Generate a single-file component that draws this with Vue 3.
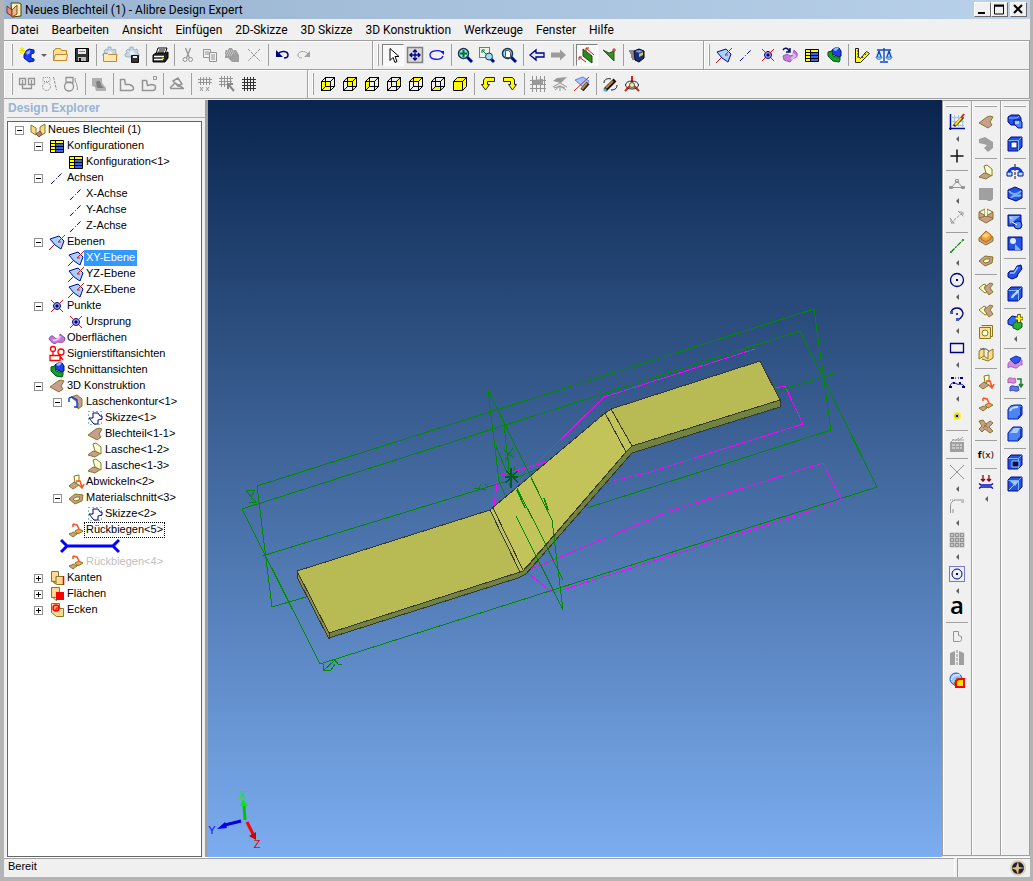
<script setup>
import { ref } from 'vue'

const menus = ['Datei', 'Bearbeiten', 'Ansicht', 'Einfügen', '2D-Skizze', '3D Skizze', '3D Konstruktion', 'Werkzeuge', 'Fenster', 'Hilfe']

const SHEET = 'fill="#c99c94" stroke="#857a1c"'
const TAB = 'fill="#ffffd8" stroke="#857a1c"'
const BLUE = 'fill="#2452e6" stroke="#000a8c"'
const GRAY = 'fill="none" stroke="#949494"'

// wireframe cube with one yellow face
const faces = {
  front: 'M1.5 5.5h9v9h-9z',
  back: 'M5.5 1.5h9v9h-9z',
  left: 'M1.5 5.5l4-4v9l-4 4z',
  right: 'M10.5 5.5l4-4v9l-4 4z',
  top: 'M1.5 5.5l4-4h9l-4 4z',
  bottom: 'M1.5 14.5l4-4h9l-4 4z',
}
const cube = (face) =>
  `<path d="${faces[face]}" fill="#ff0"/><path d="${Object.values(faces).join('')}" fill="none" stroke="#000"/>`

const blueBox = (inner) =>
  `<path d="M1 4l3-3h11v10l-4 4H1z" ${BLUE}/><path d="M1.500 4.500h10l3-3M11.500 4.500v10" fill="none" stroke="#7fb2ff"/>${inner}`

const lens = '<path d="M10 10l5 5" stroke="#00108c" stroke-width="3"/><circle cx="6.500" cy="6.500" r="5" fill="#9fe0f0" stroke="#123a58" stroke-width="1.500"/>'
const gear = '<path d="M6 0h3v2l2 1 2-1 1 2-1 2 2 1v2l-2 1H3L1 9V7l2-1-1-2 2-2 2 1z" fill="#c9d8e6" stroke="#9db2c4"/><circle cx="8" cy="6" r="2" fill="#f0f0f0"/>'

const icons = {
  app: '<path d="M5 1h8l2 1v12l-9 1z" fill="#fff3b8" stroke="#4a3c10"/><path d="M1 4l5 4v6l-5-3z" fill="#e88e70" stroke="#7a2f18"/><path d="M6 8l5-5v9l-5 3z" fill="#f5b38c" stroke="#8a4a10"/>',
  new: '<path d="M7 4l3-2 5 1v3l-3 1v4l3 1v2l-5 1-5-4V8z" fill="#1c3df0" stroke="#0010a0"/><path d="M7 5l4-2v3L8 8z" fill="#8fb4ff"/><path d="M3 0v7M0 3.500h6M1 1l5 5M5 1L1 6" stroke="#f0e000"/>',
  open: '<path d="M1.500 13.500v-10h1l1-2h5l1 2h5v10z" fill="#ffdc90" stroke="#c08a30"/><path d="M1.500 13.500l2-6h12l-1 6z" fill="#ffeebe" stroke="#c98a2c"/>',
  save: '<path d="M1.500 1.500h13v13h-13z" fill="#333" stroke="#000"/><path d="M4 2h8v5H4z" fill="#e8e8e8"/><path d="M5 4.500h6" stroke="#888"/><path d="M4 10h8v4H4z" fill="#bbb"/><path d="M5 11h2v3H5z" fill="#111"/>',
  openGear: gear + '<path d="M1.500 14.500v-8h4l1 1h8v7z" fill="#ffe9b4" stroke="#c98a2c"/>',
  saveGear: gear + '<path d="M7.500 8.500h7v7h-7z" fill="#333" stroke="#111"/><path d="M9 9h4v2H9z" fill="#eee"/>',
  print: '<path d="M6 1h9l-2 6H4z" fill="#fff" stroke="#000"/><path d="M1 8l3-2h10l2-1v6l-3 4H1z" fill="#222" stroke="#000"/><path d="M7 3h6M6 5h6" stroke="#000"/><path d="M2 9.500h10M2 12.500h9" stroke="#fff" stroke-width="1.500"/><path d="M10 11h2v1h-2z" fill="#e8e000"/>',
  cut: `<path d="M5.500 1l4 10M10.500 1l-4 10" ${GRAY} stroke-width="1.300"/><circle cx="5" cy="12.500" r="2" ${GRAY}/><circle cx="10.500" cy="12.500" r="2" ${GRAY}/>`,
  copy: `<path d="M1.500 2.500h7v8h-7zM3 5h4M3 7h4" ${GRAY}/><path d="M7.500 5.500h7v9h-7z" fill="#f0f0f0" stroke="#949494"/><path d="M9 8h4M9 10h4M9 12h4" stroke="#949494"/>`,
  paste: '<path d="M1 3h3l1-2h3l1 2h3l3 5v7H8l-4-4H1z" fill="#a0a0a0"/><path d="M1 4h10M2 6h10M1 8h7" stroke="#dcdcdc" stroke-dasharray="1 1"/>',
  delete: `<path d="M2 2l12 12M14 2L2 14" ${GRAY} stroke-dasharray="3 1"/>`,
  undo: '<path d="M4 7C7 3 14 4 14 8c0 3-3 3-4 3" fill="none" stroke="#000080" stroke-width="1.500"/><path d="M2 3v7h7z" fill="#000080"/>',
  redo: '<path d="M12 7C9 3 2 4 2 8c0 3 3 3 4 3" fill="none" stroke="#a0a0a0"/><path d="M14 4v6H8z" fill="#a0a0a0"/>',
  pointer: '<path d="M5 1.500v12l3-3 2 5 2-1-2-5h4z" fill="#fff" stroke="#000"/>',
  pan: '<path d="M.5.500h15v15H.500z" fill="#d8d8d8" stroke="#808080" stroke-width="1.500"/><path d="M8 3v10M3 8h10M6 5l2-2 2 2M6 11l2 2 2-2M5 6L3 8l2 2M11 6l2 2-2 2" fill="none" stroke="#000090" stroke-width="1.300"/>',
  rotate: '<path d="M13 5C10 3 1 3 1 8s11 6 13 1" fill="none" stroke="#1010ff" stroke-width="1.300"/><path d="M11 4h4v4z" fill="#1010ff"/>',
  zoomIn: lens + '<path d="M6.500 3v7M3 6.500h7" stroke="#007030" stroke-width="2"/>',
  zoomArea: '<path d="M.5.500h10v10H.500z" fill="none" stroke="#000" stroke-dasharray="1 1"/><path d="M3 3l4 4M3 6V3h3" fill="none" stroke="#008030"/><path d="M12 12l3 3" stroke="#00108c" stroke-width="3"/><circle cx="10" cy="9.500" r="3.500" fill="#9fe0f0" stroke="#123a58"/>',
  zoomFit: lens + '<path d="M4.500 3.500h3l2 2v5h-5z" fill="#fff" stroke="#555"/>',
  back: '<path d="M1 8l6-5v3h8v4H7v3z" fill="#dfe8fa" stroke="#000080" stroke-width="1.300"/>',
  forward: '<path d="M15 8L9 2.500v3H0v5h9v3z" fill="#9c9c9c"/>',
  dualPlane: '<path d="M4 2l9 7v7l-9-7z" fill="#2f8a18" stroke="#145008"/><path d="M0 10l7 5M7 1l8 7M0 13v-3h3M7 4V1h3" fill="none" stroke="#d01818"/>',
  plane: '<path d="M2 3l6 3 5-2v10z" fill="#3c8a28" stroke="#205c10"/><path d="M13 1v4M11 3h4" stroke="#c02020"/>',
  fast: '<path d="M5 4l5-2 5 2v7l-5 4-4-2z" fill="#1c2c80" stroke="#000"/><path d="M6 4l4-1 4 1-4 2z" fill="#70a0f0"/><path d="M10 7l4-2v3l-4 2z" fill="#d8c840"/><path d="M0 4h5M1 6h5M2 8h4M2 10h4M3 12h3" stroke="#222"/>',
  refPlane: '<path d="M0 16l5-5" stroke="#a01010"/><path d="M1 5l9-3 5 5-3 8-6-4z" fill="#a9d0ff" stroke="#000a90"/><path d="M9 8l7-7M9 8h3" fill="none" stroke="#e01818"/>',
  axis: '<path d="M2 14L14 2" stroke="#000070" stroke-dasharray="5 2 1 2"/>',
  point: '<path d="M2 2l12 12M14 2L2 14" stroke="#e01010"/><circle cx="8" cy="8" r="3.500" fill="#9aa4e8" stroke="#000090"/><path d="M2 2l4 4M14 2l-4 4" stroke="#e01010"/><path d="M7 7h2v2H7z" fill="#000" stroke="#000a70"/>',
  surface: '<path d="M0 9c2-5 4-3 6-1s5 0 5-4l5 4c0 6-5 4-7 4s-3 5-9-3z" fill="#c478dc" stroke="#8848b4"/><path d="M4 10c3 1 6-1 7-4" fill="none" stroke="#f0c8f8" stroke-width="2"/>',
  surfaceArrow: '<path d="M1 9l4-2 3 2 3-1 1-5 3 3c1 5-2 5-4 5l-3 4-6-2z" fill="#c080d8" stroke="#9858c0"/><path d="M10 6l3 3-4 3" fill="none" stroke="#ecb8f4" stroke-width="2"/><path d="M1 3c2-3 5-2 6 1M8 1v4H4" fill="none" stroke="#001060" stroke-width="1.500"/>',
  table: '<path d="M1.500 2.500h13v12h-13z" fill="#3464f0" stroke="#000"/><path d="M2 3h4v11H2z" fill="#ff0"/><path d="M2 3h12v2H2z" fill="#ff0"/><path d="M1 5.500h14M1 8.500h14M1 11.500h14M6.500 2v12" stroke="#000"/>',
  section: '<path d="M6 3l3-2h4l2 3v5l-2 1-7-3z" fill="#2040e8" stroke="#000a80"/><path d="M9 1h4l-3 3-3-1z" fill="#90c0ff"/><path d="M2 5l4-1 1 5 3 1h4v3l-1 2-6-1-5-5z" fill="#18a028" stroke="#005010"/>',
  measure: '<path d="M1.500 1.500h3v8l2 2 6-7 3 2-9 9h-5z" fill="#ff0" stroke="#222"/><path d="M3 4h2M3 7h2M3 10h2M8 9l1 2M10 6l2 2" stroke="#222"/>',
  scale: '<path d="M8 1v13M1 3h14M4 15h8M3 4L1 10M3 4l2 6M13 4l-2 6M13 4l2 6" fill="none" stroke="#1048c8" stroke-width="1.400"/><path d="M0 10h6c0 3-6 3-6 0zM10 10h6c0 3-6 3-6 0z" fill="#b0e4ff" stroke="#1878d0"/>',
  dim1: `<path d="M.5 2.500h6v6h-6zM9.500 2.500h6v6h-6zM3.500 4v9M12.500 4v9M3 12.500h10" ${GRAY} stroke-width="1.300"/>`,
  dim2: `<path d="M2 1.500h7v4H2z" ${GRAY} stroke-dasharray="1 1"/><circle cx="5.500" cy="10.500" r="4" ${GRAY} stroke-dasharray="2 1"/><path d="M12.500 1l3 13" ${GRAY} stroke-dasharray="3 1"/>`,
  dim3: `<path d="M3 1.500h7v5H3z" ${GRAY} stroke-width="1.300"/><circle cx="6" cy="10.500" r="4.500" ${GRAY} stroke-width="1.300"/><path d="M12.500 2c-2 3 2 4 2 12" ${GRAY}/>`,
  hatchPaste: '<path d="M1 2h10v5l4 5v3H5l-1-4-3-1z" fill="#b0b0b0"/><path d="M5 6c3-3 5 0 5 3l3 3H6z" fill="#808080"/>',
  shape: `<path d="M1.500 3.500h4l1 5 4 0c3 1 4 2 4 4 0 1-1 2-3 2h-10z" ${GRAY} stroke-width="1.500"/>`,
  shapeDot: `<path d="M1.500 4.500h4l1 5 4-1c3 0 4 1 4 3 0 2-1 3-3 3h-10z" ${GRAY} stroke-width="1.500"/><path d="M12.500.500h3v3h-3z" ${GRAY}/>`,
  edit: `<path d="M1 12.500h14M1 12l5-5 8 5M4 5l5-3 4 6-4 2z" ${GRAY} stroke-width="1.500"/>`,
  gridX: `<path d="M3.500 1v8M6.500 1v8M9.500 1v8M12.500 1v8M1 3.500h14M1 6.500h14M3 11l3 4M6 11l-3 4M9 11l3 4M12 11l-3 4" ${GRAY}/>`,
  gridArrow: `<path d="M2.500 0v11M5.500 0v11M8.500 0v9M11.500 0v8M0 2.500h14M0 5.500h13M0 8.500h11" ${GRAY}/><path d="M9 8l6 7M9 13V8h5" fill="none" stroke="#888" stroke-width="2"/>`,
  grid: '<path d="M3.500 1v14M6.500 1v14M9.500 1v14M12.500 1v14M1 3.500h14M1 6.500h14M1 9.500h14M1 12.500h14" stroke="#333"/>',
  cubeFront: cube('front'),
  cubeBack: cube('back'),
  cubeLeft: cube('left'),
  cubeRight: cube('right'),
  cubeTop: cube('top'),
  cubeBottom: cube('bottom'),
  cubeSolid: '<path d="M1.500 5.500l4-4h9v9l-4 4h-9z" fill="#ff0" stroke="#000"/><path d="M1.500 5.500h9v9M10.500 5.500l4-4" fill="none" stroke="#000"/>',
  turnLeft: '<path d="M3.500 8.500V4l2-2.500h9v4h-7v3h2l-4 5.500-4-5.500z" fill="#ff0" stroke="#222"/>',
  turnRight: '<path d="M12.500 8.500V4l-2-2.500h-9v4h7v3h-2l4 5.500 4-5.500z" fill="#ff0" stroke="#222"/>',
  meshPlane: `<path d="M2.500 0v16M6.500 0v16M10.500 0v16M14.500 0v16M0 4.500h16M0 8.500h16M0 12.500h16" ${GRAY}/><path d="M3 4l10-1v6H2z" fill="#999"/>`,
  shadePlane: `<path d="M1 5l4-3 10-1-6 6z" fill="#999"/><path d="M8 7l-7 4M8 7l7 4M3 14l5-4 6 4M2 12l6-2 5 2M8 10v5" ${GRAY}/>`,
  planeBrush: '<path d="M1 4l8-3 6 4-5 7z" fill="#a8c4ff" stroke="#6080e0"/><path d="M0 15L15 1" stroke="#d02020"/><path d="M8 14l6-7" stroke="#222" stroke-width="4"/><path d="M8 13l5-6" stroke="#b88438" stroke-width="2"/>',
  brush: '<path d="M3 14L13 4" stroke="#111" stroke-width="4"/><path d="M4 12l7-7" stroke="#b88438" stroke-width="2"/><path d="M2 15l2-2" stroke="#50b8d8" stroke-width="3"/><path d="M2 7c0-4 4-5 7-4M15 9c0 4-3 5-6 5" fill="none" stroke="#111"/>',
  orbit: '<path d="M8 7V0M6 10l-5 5M10 10l5 5" stroke="#e02010" stroke-width="2"/><ellipse cx="8" cy="9" rx="6.500" ry="4" fill="none" stroke="#222"/><circle cx="8" cy="9" r="2.500" fill="#f4ec90" stroke="#555"/>',
  root: '<path d="M1 3l5 3v7l-5-3zM10 5l5-3v9l-5 3z" fill="#ffdb88" stroke="#857a1c"/><path d="M6 12l4-3 2 3-3 3z" fill="#c08078" stroke="#805048"/>',
  pen: '<circle cx="4" cy="3" r="2.500" fill="none" stroke="#f00" stroke-width="1.300"/><circle cx="12" cy="6" r="3" fill="none" stroke="#f00" stroke-width="1.300"/><path d="M1 9.500h10v5H1zM10 9l4 5M4 6v3" fill="none" stroke="#f00" stroke-width="1.300"/>',
  sheet: `<path d="M1 9l8-6 3-1 3 1-3 5 2 3-4 3z" ${SHEET}/>`,
  flangeContour: `<path d="M3 3l6-2 5 4v7l-4 3V9z" ${SHEET}/><path d="M1 4l3-1 5 3v8M1 4v4M6 13h4" fill="none" stroke="#1048e8" stroke-width="1.500"/>`,
  sketch: '<path d="M1.500 1.500h13v13h-13z" fill="none" stroke="#008080" stroke-dasharray="1 3"/><path d="M6 3v5H2l5 6h4V10l4-1v-3h-2l-2-3z" fill="none" stroke="#000080"/>',
  flange: `<path d="M1 13l5-4 8 2-6 4z" ${SHEET}/><path d="M6 2l3-1 5 4v7l-6-3z" ${TAB}/>`,
  unfold: `<path d="M1 12l5-4 5 3-6 4z" ${SHEET}/><path d="M6 2l5-1v6l-4 2z" ${TAB}/><path d="M8 7h4l2 6M11 11l3 3 2-4" fill="none" stroke="#ff5020" stroke-width="1.500"/>`,
  cutout: `<path d="M1 9l6-5 8 1-1 6-7 3z" ${SHEET}/><path d="M5 9l3-2h4l-1 3-4 1z" fill="#fffbe0" stroke="#857a1c"/>`,
  refold: `<path d="M1 12l5-2 3 2-4 3z" ${SHEET}/><path d="M7 9l4-2 4 2-5 3z" fill="#ff9868" stroke="#857a1c"/><path d="M5 2l4 1 2 4M5 2v3" fill="none" stroke="#ff5020" stroke-width="1.500"/>`,
  edges: '<path d="M2.500 1.500h7v10h-7z" fill="#ffd898" stroke="#857a1c"/><path d="M3 11l4 3V6.500h7.500v8h-7z" fill="#ffd898" stroke="#857a1c"/><path d="M14.500 6v9" stroke="#f00" stroke-width="1.500"/>',
  faces: '<path d="M2.500 1.500h8v10h-8z" fill="#ffd898" stroke="#857a1c"/><path d="M3 11l5 4" stroke="#857a1c"/><path d="M7 6h8v8H7z" fill="#f00"/>',
  corners: '<path d="M2.500 1.500h8v5h4v8h-7l-5-4z" fill="#ffd898" stroke="#857a1c"/><circle cx="7" cy="6" r="3" fill="#ffa070" stroke="#f00" stroke-width="1.500"/><path d="M7 6h3M7 6v3" stroke="#f00"/>',
  sketchMode: '<path d="M1.500 0v16M0 14.500h16" stroke="#0010a0" stroke-width="1.500"/><path d="M5.500 1v13M9.500 1v13M13.500 1v13M2 3.500h13M2 7.500h13M2 11.500h13" stroke="#a8c0f0"/><path d="M5 12l9-9" stroke="#222" stroke-width="3"/><path d="M6 11l7-8" stroke="#ffe000" stroke-width="2"/><path d="M12 4l3-4" stroke="#f02020" stroke-width="2"/>',
  plus: '<path d="M8 1.500v13M1.500 8h13" stroke="#111" stroke-width="1.500"/>',
  dimTri: `<path d="M1 11.500h14M3 11l5-6 5 6" ${GRAY}/><path d="M6.500 3.500h3v3h-3zM.5 10.500h3v2h-3zM12.500 10.500h3v2h-3z" ${GRAY}/>`,
  dimension: `<path d="M2 13L14 2M2 9v4h4M10 2h4v4M1 8l5 6M9 1l6 6" ${GRAY} stroke-dasharray="3 1"/>`,
  line: '<path d="M2 14L14 2" stroke="#008000" stroke-width="1.300" stroke-dasharray="5 1 2 1"/><path d="M1 13h2v2H1zM13 1h2v2h-2z" fill="#30a030"/>',
  circle: '<circle cx="8" cy="8" r="6.500" fill="none" stroke="#000080" stroke-width="1.300"/><path d="M7 7h2v2H7z" fill="#000080"/>',
  arc: '<path d="M2 6C4 1 12 0 14 7c0 3-2 5-5 7M7 8h2" fill="none" stroke="#000080" stroke-width="1.300"/><path d="M1 5h3v3H1zM7 12h3v3H7z" fill="#4458c0"/>',
  rect: '<path d="M1.500 3.500h13v9h-13z" fill="none" stroke="#000080" stroke-width="1.300"/>',
  spline: '<path d="M1 12c2-5 5-3 7-2s5-1 7 2" fill="none" stroke="#000080"/><path d="M3 4h9" stroke="#000080" stroke-dasharray="1 2"/><path d="M0 12h3v2H0zM4 8h2v2H4zM10 8h2v2h-2zM13 12h3v2h-3zM2 3h3v2H2zM11 3h3v2h-3z" fill="#000080"/>',
  dot: '<circle cx="8" cy="8" r="4" fill="#fff600"/><circle cx="8" cy="8" r="2.500" fill="#b8b8b8"/><path d="M7 7h2v2H7z" fill="#000"/>',
  equation: '<path d="M1 6h14v10H1z" fill="#a0a0a0"/><path d="M2 6l3-3M6 5l4-3M9 5l5-4M3 4h12" stroke="#a0a0a0"/><path d="M3 9h10M3 12h10" stroke="#eee" stroke-dasharray="3 1"/>',
  trim: `<path d="M1 1l14 14M15 1L1 15" ${GRAY}/>`,
  fillet: `<path d="M1.500 15V8c0-4 3-6 6-6H15M4 15v-4M12 4h3" ${GRAY}/><path d="M1 2h6" stroke="#949494" stroke-dasharray="1 1"/>`,
  pattern: `<path d="M1.500 1.500h3v3h-3zM6.500 1.500h3v3h-3zM11.500 1.500h3v3h-3zM1.500 6.500h3v3h-3zM6.500 6.500h3v3h-3zM11.500 6.500h3v3h-3zM1.500 11.500h3v3h-3zM6.500 11.500h3v3h-3zM11.500 11.500h3v3h-3z" ${GRAY} stroke-width="1.500"/>`,
  circleFrame: '<path d="M.5.500h15v15H.500z" fill="none" stroke="#0000b0" stroke-dasharray="1 1"/><circle cx="8" cy="8" r="5" fill="none" stroke="#000080"/><path d="M7 7h2v2H7z" fill="#000080"/>',
  text: '<text x="8" y="14" text-anchor="middle" font-family="Open Sans, sans-serif" font-weight="600" font-size="24">a</text>',
  fx: '<text x="8" y="12" text-anchor="middle" font-family="DejaVu Sans, sans-serif" font-size="9"><tspan font-weight="bold">f</tspan>(x)</text>',
  outline: `<path d="M4.500 3.500h5v4l3 1v3c0 1-1 2-2 2h-6z" ${GRAY}/>`,
  mirror: '<path d="M1 3l5-2v14H1zM15 3l-5-2v14h5z" fill="#a0a0a0"/><path d="M8 0v16" stroke="#888" stroke-dasharray="3 1"/>',
  analyse: '<circle cx="7" cy="7" r="6" fill="#a0c8ff" stroke="#1848d0"/><path d="M2 8c1-4 5-6 9-5" stroke="#fff" fill="none"/><path d="M5 12l3-6 5 1v7H6z" fill="#f8d800" stroke="#886000"/><path d="M7 15V9l3-2h5v8z" fill="#f4e400" stroke="#f00" stroke-width="2"/>',
  bendGray: '<path d="M1 3l6-2 8 5v6l-5 4-4-4 3-3-8-2z" fill="#a0a0a0"/>',
  blockGray: '<path d="M1 2h14v11l-2 2h-3l-1-1H1z" fill="#a0a0a0"/>',
  corner: `<path d="M8 8l7-4v7l-7 4-7-4V4z" ${SHEET}/><path d="M7 1v7M9 1v7M1 4l6-3M9 1l6 3M1 10l7-2 7 2" fill="none" stroke="#857a1c"/><path d="M7 1h2v7H7z" fill="#ffffd8"/>`,
  dimple: `<path d="M1 8l7-5 7 4v4l-7 4-7-4z" ${SHEET}/><path d="M3 6l5-5 5 4v4l-5 3-5-3z" fill="#f0a038" stroke="#b06818"/><path d="M4 6l4-3 4 2-4 3z" fill="#ffd478"/>`,
  sheetCut: `<path d="M6 8l6-5 3 1-3 4 3 4-4 3z" ${SHEET}/><path d="M1 8l5-4 2 1-2 3 3 4-2 1z" ${TAB}/>`,
  frame: `<path d="M1.500 3.500h11v11h-11zM3.500 1.500h11v11h-2" fill="#ffe0a0" stroke="#857a1c"/><circle cx="7" cy="9" r="3" ${TAB}/>`,
  boxFold: '<path d="M1 5l5-3v8l-5 3zM6 10l4 3V6l5-3v9l-5 3-6-2" fill="#ffdb88" stroke="#857a1c"/><path d="M2 3h6l3 2" fill="none" stroke="#557" />',
  pattern3: `<path d="M1 3l4-1 3 4 4-3 3 2-4 4 4 4-3 2-5-4-3 3-3-3 3-3z" ${SHEET}/><path d="M6 7l4 3M5 10l4-4" stroke="#857a1c"/>`,
  thickness: '<path d="M5 1v6M3 5l2 2 2-2M11 1v6M9 5l2 2 2-2" fill="none" stroke="#900010" stroke-width="1.300"/><path d="M1 9.500l2 1.500h10l2-1.500M1 14.500L3 13h10l2 1.500" fill="none" stroke="#0010c0" stroke-width="1.500"/>',
  extrude: `<path d="M1 3l3-2h8l2 3v4l-3 3H4L1 8z" ${BLUE}/><path d="M2 4h8l2-2" fill="none" stroke="#8cb8ff"/><path d="M7 6h6l2 2v6h-4L7 10z" fill="#4a80ff" stroke="#000a8c"/><path d="M8 7h4v3H8z" fill="#a8ccff"/>`,
  pocket: blueBox('<path d="M4 6h6v6H4z" fill="#fff" stroke="#000a8c"/>'),
  revolve: '<path d="M8 0v16" stroke="#111" stroke-dasharray="3 1"/><path d="M2 8c0-5 12-5 12 0" fill="none" stroke="#1038e0" stroke-width="3"/><path d="M0 8h5v4H0zM11 8h5v4h-5z" fill="#b8e0ff" stroke="#0010a0"/>',
  revolveCut: `<path d="M1 4l7-3 7 3v8l-6 3-8-3z" ${BLUE}/><path d="M2 5c3 4 8 4 12 0M4 12c2-4 6-1 10-3" fill="none" stroke="#7ab0ff" stroke-width="2"/>`,
  loft: '<path d="M1 1h13v11H1z" fill="#2452e6" stroke="#000a8c"/><path d="M2 2h11L3 10z" fill="#80b0ff"/><circle cx="11" cy="11" r="4" fill="#5088f8" stroke="#000a8c"/><path d="M3 4h2M5 8l5 3" stroke="#fff"/>',
  loftCut: '<path d="M1 1h14v13H1z" fill="#2452e6" stroke="#000a8c"/><circle cx="6" cy="5" r="3" fill="#d8f0ff"/><path d="M8 8l6 6H8z" fill="#80b0ff"/>',
  sweep: `<path d="M1 9l2-2h4l3-5 4-1 1 4-4 5-1 3-5 2-4-2z" ${BLUE}/><path d="M3 9h4l4-6" fill="none" stroke="#90c0ff" stroke-width="1.500"/>`,
  sweepCut: blueBox('<path d="M5 12c1-5 5-3 6-8" fill="none" stroke="#b8d8ff" stroke-width="2.500"/>'),
  boolean: '<path d="M1 6l4-4 5 1 1 6-5 3-5-2z" fill="#3468f8" stroke="#000a8c"/><path d="M6 10l4-3 5 2v4l-4 3-5-2z" fill="#28b030" stroke="#006010"/><path d="M12 0v9M8 4.500h8" stroke="#554800" stroke-width="3.500"/><path d="M12 1v7M8.500 4.500h7" stroke="#ff0" stroke-width="2"/>',
  surfaceTop: '<path d="M1 10c2-4 5-5 7-2s5-3 7-2v5c-3-1-3 3-6 3s-5-3-8 0z" fill="#d08ce0" stroke="#a060c0"/><path d="M3 5l6-3 5 2-2 4-4 2z" fill="#2c58f0" stroke="#1030b0"/>',
  surfaceSwap: '<path d="M1 3c3-3 4 1 7-1l1 4c-3 3-5-1-8 1z" fill="#d88cd8" stroke="#b060b0"/><path d="M3 11c3-3 5 1 8-1l1 4c-3 3-5-1-9 1z" fill="#6074f0" stroke="#3848c0"/><path d="M10 3h4v7M12 8l2 3 2-3" fill="none" stroke="#188028" stroke-width="1.500"/>',
  round: '<path d="M1 6c1-4 4-5 8-5h5l1 1v9l-4 4H1z" fill="#4c84f8" stroke="#0018a0"/><path d="M3 7c1-3 3-4 8-4" fill="none" stroke="#c0e0ff" stroke-width="2"/><path d="M14 3v8l-3 3" fill="none" stroke="#1838c0" stroke-width="2"/>',
  chamfer: '<path d="M1 7l5-6h8l1 1v9l-4 4H1z" fill="#4c84f8" stroke="#0018a0"/><path d="M3 7l4-5h6l-3 5z" fill="#a8ccff"/><path d="M14 3v8l-3 3" fill="none" stroke="#1838c0" stroke-width="2"/>',
  shell: blueBox('<path d="M5 7h7v6H5z" fill="#001060" stroke="#a8ccff"/>'),
  draft: blueBox('<path d="M3 5h9l-4 5z" fill="#9cc4ff"/><path d="M2 14l5-5" stroke="#a8ccff"/>'),
}

// "|" is a separator, "v" a drop-down arrow, a leading "!" marks a pressed button
const barTop = [
  { cls: 'band-file', items: ['new', 'v', 'open', 'save', '|', 'openGear', 'saveGear', '|', 'print', '|', 'cut', 'copy', 'paste', 'delete', '|', 'undo', 'redo'] },
  { cls: 'band-view', items: ['!pointer', 'pan', 'rotate', '|', 'zoomIn', 'zoomArea', 'zoomFit', '|', 'back', 'forward', '|', '!dualPlane', 'plane', '|', 'fast'] },
  { cls: 'band-rest', items: ['refPlane', 'axis', 'point', 'surfaceArrow', 'table', 'section', '|', 'measure', 'scale'] },
]
const barBottom = [
  { cls: 'band-sketch', items: ['dim1', 'dim2', 'dim3', '|', 'hatchPaste', '|', 'shape', 'shapeDot', '|', 'edit', '|', 'gridX', 'gridArrow', 'grid'] },
  { cls: 'band-rest', items: ['cubeFront', 'cubeBack', 'cubeLeft', 'cubeRight', 'cubeTop', 'cubeBottom', 'cubeSolid', '|', 'turnLeft', 'turnRight', '|', 'meshPlane', 'shadePlane', 'planeBrush', '|', 'brush', 'orbit'] },
]
const rails = [
  ['sketchMode', 'v', 'plus', '|', 'dimTri', 'v', 'dimension', '|', 'line', 'v', 'circle', 'v', 'arc', 'v', 'rect', 'v', 'spline', 'v', 'dot', '|', 'equation', '|', 'trim', 'v', 'fillet', 'v', 'pattern', 'v', 'circleFrame', 'v', 'text', '|', 'outline', 'mirror', 'analyse'],
  ['sheet', 'bendGray', '|', 'flange', 'blockGray', 'corner', 'dimple', 'cutout', '|', 'sheetCut', 'sheetCut', 'frame', 'boxFold', '|', 'unfold', 'refold', 'pattern3', '|', 'fx', '|', 'thickness', 'v'],
  ['extrude', 'pocket', '|', 'revolve', 'revolveCut', '|', 'loft', 'loftCut', '|', 'sweep', 'sweepCut', '|', 'boolean', 'v', '|', 'surfaceTop', 'surfaceSwap', '|', 'round', 'chamfer', '|', 'shell', 'draft'],
]

const tree = [
  { level: 0, box: '-', icon: 'root', text: 'Neues Blechteil (1)' },
  { level: 1, box: '-', icon: 'table', text: 'Konfigurationen' },
  { level: 2, icon: 'table', text: 'Konfiguration<1>' },
  { level: 1, box: '-', icon: 'axis', text: 'Achsen' },
  { level: 2, icon: 'axis', text: 'X-Achse' },
  { level: 2, icon: 'axis', text: 'Y-Achse' },
  { level: 2, icon: 'axis', text: 'Z-Achse' },
  { level: 1, box: '-', icon: 'refPlane', text: 'Ebenen' },
  { level: 2, icon: 'refPlane', text: 'XY-Ebene' },
  { level: 2, icon: 'refPlane', text: 'YZ-Ebene' },
  { level: 2, icon: 'refPlane', text: 'ZX-Ebene' },
  { level: 1, box: '-', icon: 'point', text: 'Punkte' },
  { level: 2, icon: 'point', text: 'Ursprung' },
  { level: 1, icon: 'surface', text: 'Oberflächen' },
  { level: 1, icon: 'pen', text: 'Signierstiftansichten' },
  { level: 1, icon: 'section', text: 'Schnittansichten' },
  { level: 1, box: '-', icon: 'sheet', text: '3D Konstruktion' },
  { level: 2, box: '-', icon: 'flangeContour', text: 'Laschenkontur<1>' },
  { level: 3, icon: 'sketch', text: 'Skizze<1>' },
  { level: 3, icon: 'sheet', text: 'Blechteil<1-1>' },
  { level: 3, icon: 'flange', text: 'Lasche<1-2>' },
  { level: 3, icon: 'flange', text: 'Lasche<1-3>' },
  { level: 2, icon: 'unfold', text: 'Abwickeln<2>' },
  { level: 2, box: '-', icon: 'cutout', text: 'Materialschnitt<3>' },
  { level: 3, icon: 'sketch', text: 'Skizze<2>' },
  { level: 2, icon: 'refold', text: 'Rückbiegen<5>', focused: true },
  { level: 2, rollback: true },
  { level: 2, icon: 'refold', text: 'Rückbiegen<4>', dimmed: true },
  { level: 1, box: '+', icon: 'edges', text: 'Kanten' },
  { level: 1, box: '+', icon: 'faces', text: 'Flächen' },
  { level: 1, box: '+', icon: 'corners', text: 'Ecken' },
]

const selected = ref('XY-Ebene')
</script>

<template>
  <div class="window">
    <header class="title-bar">
      <svg class="icon" viewBox="0 0 16 16" v-html="icons.app"></svg>
      <span class="title">Neues Blechteil (1) - Alibre Design Expert</span>
      <button type="button" class="win-btn" aria-label="Minimieren">
        <svg viewBox="0 0 14 13"><path d="M3 10h7" stroke="#000" stroke-width="2" /></svg>
      </button>
      <button type="button" class="win-btn" aria-label="Maximieren">
        <svg viewBox="0 0 14 13"><path d="M2.500 3v8h9V3z" fill="none" stroke="#000" /><path d="M2 2.500h10" stroke="#000" stroke-width="2" /></svg>
      </button>
      <button type="button" class="win-btn close" aria-label="Schließen">
        <svg viewBox="0 0 14 13"><path d="M3 2l8 8M11 2l-8 8" stroke="#000" stroke-width="2" /></svg>
      </button>
    </header>

    <nav class="menu-bar">
      <button v-for="menu in menus" :key="menu" type="button" class="menu">{{ menu }}</button>
    </nav>

    <div class="toolbars">
      <div v-for="(bar, b) in [barTop, barBottom]" :key="b" class="toolbar">
        <div v-for="band in bar" :key="band.cls" class="band" :class="band.cls">
          <span class="grip"></span>
          <template v-for="(item, i) in band.items" :key="i">
            <span v-if="item === '|'" class="sep"></span>
            <button v-else-if="item === 'v'" type="button" class="drop" aria-label="Mehr"></button>
            <button v-else type="button" class="tool" :class="{ pressed: item[0] === '!' }" :aria-label="item.replace('!', '')">
              <svg class="icon" viewBox="0 0 16 16" v-html="icons[item.replace('!', '')]"></svg>
            </button>
          </template>
        </div>
      </div>
    </div>

    <main class="workspace">
      <aside class="explorer">
        <h2>Design Explorer</h2>
        <ul class="tree">
          <li v-for="(node, i) in tree" :key="i" class="level" :class="'level-' + node.level">
            <svg v-if="node.rollback" class="rollback" viewBox="0 0 60 16">
              <path d="M1 2l6 6-6 6M59 2l-6 6 6 6M7 8h46" fill="none" stroke="#00f" stroke-width="3" />
            </svg>
            <template v-else>
              <span class="expander"><button v-if="node.box" type="button" class="box" :class="{ plus: node.box === '+' }" :aria-label="node.text"></button></span>
              <svg class="icon" viewBox="0 0 16 16" v-html="icons[node.icon]"></svg>
              <button type="button" class="label"
                :class="{ selected: selected === node.text, focused: node.focused, dimmed: node.dimmed }"
                @click="selected = node.text">{{ node.text }}</button>
            </template>
          </li>
        </ul>
      </aside>

      <section class="viewport">
        <svg class="scene" viewBox="208 100 734 757">
          <g class="wire" fill="none" stroke="#008a00">
            <path d="M306 597L272 607 257 486 814 309 831 430 587 508" />
            <path d="M242 509L800 331 877 487 320 664z" />
            <path d="M262 556L511 480 545 466M777 391l60-18" />
            <path d="M488 390l11 91 6 14" />
            <path d="M504 424l6 56M496 446l15 36M515 467l-6 19" />
            <path d="M247 490l8 0-4 7 5 5-7 0M251 497l-5-7" />
            <path d="M323 671l12-11M323 671l8-1 4-6M335 660l3 4 4 0M324 664l-1 7" />
            <path d="M474 488l12 2M477 492l4-8M485 483l3 5" />
            <path d="M504 450l10 8M513 448l-8 12M508 458l0 8" />
          </g>
          <g class="wire" fill="none" stroke="#f0f">
            <path d="M494 506l4-30 48-14M494 506l46-46 64-63" />
            <path d="M604 397l151-48M775 388l10-2 18 38-153 48-42 10" stroke-dasharray="6 1" />
            <path d="M525 571l28 22 289-92-19-38-153 48-129 54-16 6" stroke-dasharray="6 1" />
          </g>
          <g class="wire" stroke="#37372c">
            <path d="M297 571v6l32 62v-6z" fill="#8c8c4c" />
            <path d="M329 633l191-61 6-4 100-116 6-6 148-46v7l-148 46-106 121-8 4-189 60z" fill="#718341" />
            <path d="M297 571l193-61 30 62-191 61z" fill="#b8ba54" />
            <path d="M490 510L605 413l8-5 19 38-6 6-103 119-3 1z" fill="#c2c45a" />
            <path d="M611 409l149-48 20 39-148 46z" fill="#b8ba54" />
            <path d="M493 508l30 62M605 413l21 39" fill="none" />
          </g>
          <g class="wire" fill="none" stroke="#008a00">
            <path d="M488 390l64 130 11 90-47-94M517 488l24 47 22 45M541 565l22 45" />
            <path d="M544 498l4 12M517 490l8 18" stroke-width="1.500" />
            <path d="M506 471l12 11M517 471l-11 12M511 468v20M505 477l13 0" stroke="#005c20" stroke-width="1.500" />
          </g>
          <path d="M245 820l-1-15" stroke="#00c400" stroke-width="3" />
          <path d="M240 806l3-7 5 7z" fill="#0e0" />
          <path d="M241 821l-16 4" stroke="#0000e0" stroke-width="3" />
          <path d="M217 829l8-7 2 6z" fill="#00f" />
          <path d="M247 822l6 12" stroke="#f00" stroke-width="3" />
          <path d="M249 836l7-4v8z" fill="#c00" />
          <g class="axis-names">
            <text x="242" y="799" fill="#0e0">X</text>
            <text x="212" y="834" fill="#1010f0">Y</text>
            <text x="257" y="848" fill="#e00000">Z</text>
          </g>
        </svg>
      </section>

      <div class="rails">
        <div v-for="(rail, r) in rails" :key="r" class="rail">
          <span class="grip"></span>
          <template v-for="(item, i) in rail" :key="i">
            <span v-if="item === '|'" class="sep"></span>
            <button v-else-if="item === 'v'" type="button" class="drop" aria-label="Mehr"></button>
            <button v-else type="button" class="tool" :aria-label="item">
              <svg class="icon" viewBox="0 0 16 16" v-html="icons[item]"></svg>
            </button>
          </template>
        </div>
      </div>
    </main>

    <footer class="status-bar">
      <span class="status-text">Bereit</span>
      <span class="status-end">
        <svg class="icon" viewBox="0 0 16 16">
          <circle cx="8" cy="8" r="7" fill="#1c1c3c" stroke="#d8d0b0" stroke-width="2" />
          <path d="M8 1l1 6 6 1-6 1-1 6-2-5-5-2 5-1z" fill="#e0c070" />
        </svg>
      </span>
    </footer>
  </div>
</template>

<style>
body {
  margin: 0;
}
</style>

<style scoped>
.window {
  box-sizing: border-box;
  display: flex;
  flex-direction: column;
  min-height: 100vh;
  border: solid #b4b4b4;
  border-width: 0 3px 4px 4px;
  background: #f0f0f0;
  color: #000;
  font-family: Roboto, "Open Sans", sans-serif;
  font-size: 12px;
}

button {
  margin: 0;
  padding: 0;
  border: none;
  background: none;
  color: inherit;
  font: inherit;
}

.icon {
  display: block;
  flex: none;
  width: 16px;
  height: 16px;
  overflow: visible;
}

.title-bar {
  display: flex;
  align-items: center;
  height: 19px;
  padding: 0 3px 0 2px;
  background: linear-gradient(90deg, #99b4d1, #b9d1ea);
}

.title {
  flex: 1;
  margin-left: 3px;
}

.win-btn {
  box-sizing: border-box;
  width: 17px;
  height: 15px;
  border: 1px solid;
  border-color: #fff #696969 #696969 #fff;
  background: #f0f0f0;
}

.win-btn svg {
  display: block;
  width: 14px;
  height: 13px;
}

.win-btn.close {
  margin-left: 2px;
}

.menu-bar {
  display: flex;
  height: 21px;
}

.menu {
  padding: 0 6px 0 7px;
}

.toolbars {
  padding-bottom: 1px;
}

.toolbar {
  box-sizing: border-box;
  display: flex;
  height: 29px;
  border-top: 1px solid #a0a0a0;
  border-right: 1px solid #a0a0a0;
  box-shadow: inset 0 1px #fff;
}

.toolbar:last-child {
  height: 30px;
  border-bottom: 1px solid #a0a0a0;
}

.band {
  display: flex;
  align-items: center;
  border-left: 1px solid #a0a0a0;
  box-shadow: inset 1px 0 #fff;
}

.band:first-child {
  padding-left: 3px;
  border-left: none;
}

.band-file {
  padding-right: 57px;
}

.band-view {
  padding-right: 55px;
}

.band-sketch {
  padding-right: 47px;
}

.band-rest {
  flex: 1;
}

.toolbar .grip {
  width: 1px;
  height: 22px;
  margin: 0 3px 0 4px;
  border-right: 1px solid #a0a0a0;
  background: #fff;
}

.tool {
  box-sizing: border-box;
  display: flex;
  flex: none;
  align-items: center;
  justify-content: center;
  width: 22px;
  height: 22px;
}

.tool.pressed {
  border: 1px solid;
  border-color: #808080 #fff #fff #808080;
  background: #f8f8f8;
}

.toolbar .sep {
  box-sizing: border-box;
  width: 6px;
  height: 22px;
  border-right: 2px solid transparent;
  border-left: 3px solid transparent;
  background: #a0a0a0 content-box;
}

.toolbar .drop {
  width: 11px;
  height: 22px;
}

.drop::before {
  content: "";
  display: block;
  width: 0;
  margin: auto;
  border: 3px solid transparent;
  border-top-color: #606060;
  border-bottom: none;
}

.workspace {
  display: flex;
  flex: 1;
}

.explorer {
  box-sizing: border-box;
  display: flex;
  flex-direction: column;
  width: 204px;
  padding: 0 3px 0 3px;
  border-right: 3px solid #a0a0a0;
  font-family: "Liberation Sans", sans-serif;
}

h2 {
  margin: 0 -3px 3px 0;
  padding-left: 1px;
  border-bottom: 1px solid #99b4d1;
  color: #99b4d1;
  font-size: 12px;
  line-height: 17px;
}

.tree {
  flex: 1;
  margin: 0;
  padding: 0 0 0 3px;
  border: 1px solid #646464;
  background: #fff;
  list-style: none;
}

.level {
  display: flex;
  align-items: center;
  height: 16px;
  font-size: 11px;
}

.level-1 {
  padding-left: 19px;
}

.level-2 {
  padding-left: 38px;
}

.level-3 {
  padding-left: 57px;
}

.expander {
  flex: none;
  width: 19px;
}

.box {
  box-sizing: border-box;
  display: block;
  width: 9px;
  height: 9px;
  margin-left: 4px;
  border: 1px solid #919191;
  background: linear-gradient(#000, #000) center / 5px 1px no-repeat;
}

.box.plus {
  background: linear-gradient(#000, #000) center / 5px 1px no-repeat, linear-gradient(#000, #000) center / 1px 5px no-repeat;
}

.label {
  box-sizing: border-box;
  height: 16px;
  padding: 0 2px 2px;
  line-height: 14px;
  white-space: nowrap;
}

.label.selected {
  background: #3399ff;
  color: #fff;
}

.label.focused {
  outline: 1px dotted #000;
  outline-offset: -1px;
}

.label.dimmed {
  color: #c0c0c0;
}

.rollback {
  width: 60px;
  height: 16px;
  margin-left: 11px;
}

.viewport {
  flex: 1;
  min-width: 0;
  background: linear-gradient(#09254e, #7cadf0);
}

.scene {
  display: block;
  width: 100%;
}

.wire {
  shape-rendering: crispEdges;
}

.axis-names {
  font-family: "Liberation Sans", sans-serif;
  font-size: 11px;
  text-anchor: middle;
}

.rails {
  display: flex;
  margin-bottom: 1px;
  border-top: 1px solid #a0a0a0;
  border-bottom: 1px solid #a0a0a0;
}

.rail {
  box-sizing: border-box;
  display: flex;
  flex-direction: column;
  align-items: center;
  width: 29px;
  border-left: 1px solid #a0a0a0;
  box-shadow: inset 1px 0 #fff;
}

.rail:last-child {
  width: 30px;
  border-right: 1px solid #a0a0a0;
}

.rail .grip {
  width: 22px;
  height: 1px;
  margin: 4px 0;
  border-bottom: 1px solid #a0a0a0;
  background: #fff;
}

.rail .sep {
  box-sizing: border-box;
  width: 22px;
  height: 6px;
  border-top: 3px solid transparent;
  border-bottom: 2px solid transparent;
  background: #a0a0a0 content-box;
}

.rail .drop {
  width: 22px;
  height: 12px;
}

.rail .drop::before {
  border: 3px solid transparent;
  border-right-color: #606060;
  border-left: none;
}

.status-bar {
  display: flex;
  gap: 2px;
  height: 19px;
  border-top: 1px solid #fff;
  font-family: "Liberation Sans", sans-serif;
  font-size: 11px;
}

.status-text {
  flex: 1;
  padding-left: 4px;
  border-top: 1px solid #a0a0a0;
  border-right: 1px solid #fff;
  line-height: 15px;
}

.status-end {
  display: flex;
  align-items: center;
  justify-content: flex-end;
  width: 68px;
  padding-right: 4px;
  border-top: 1px solid #a0a0a0;
  border-left: 1px solid #a0a0a0;
}
</style>
